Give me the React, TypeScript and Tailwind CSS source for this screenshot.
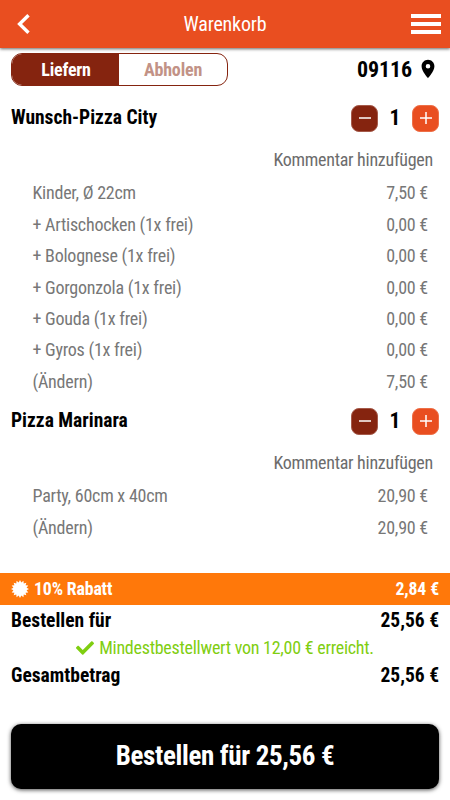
import { FaCheck } from "react-icons/fa";
import { MdPlace } from "react-icons/md";

type Line = { label: string; price: string };

type Item = { name: string; count: number; lines: Line[] };

const items: Item[] = [
  {
    name: "Wunsch-Pizza City",
    count: 1,
    lines: [
      { label: "Kinder, Ø 22cm", price: "7,50 €" },
      { label: "+ Artischocken (1x frei)", price: "0,00 €" },
      { label: "+ Bolognese (1x frei)", price: "0,00 €" },
      { label: "+ Gorgonzola (1x frei)", price: "0,00 €" },
      { label: "+ Gouda (1x frei)", price: "0,00 €" },
      { label: "+ Gyros (1x frei)", price: "0,00 €" },
      { label: "(Ändern)", price: "7,50 €" },
    ],
  },
  {
    name: "Pizza Marinara",
    count: 1,
    lines: [
      { label: "Party, 60cm x 40cm", price: "20,90 €" },
      { label: "(Ändern)", price: "20,90 €" },
    ],
  },
];

// 16-pointed badge
const badgePoints = Array.from({ length: 32 }, (_, i) => {
  const r = i % 2 === 0 ? 9 : 6.7;
  const a = (i * Math.PI) / 16;
  return `${(9 + r * Math.sin(a)).toFixed(2)},${(9 - r * Math.cos(a)).toFixed(2)}`;
}).join(" ");

function Header() {
  return (
    <header className="flex h-12 shrink-0 items-center justify-between bg-[#e94e20] pl-[17px] pr-[9px] text-white shadow-[0_1px_3px_rgba(0,0,0,0.6)]">
      <button className="w-[22px]" aria-label="Zurück">
        <svg width="13" height="20" viewBox="0 0 13 20" fill="none" stroke="currentColor" strokeWidth="3.4">
          <path d="M11.5 1.3L2.6 10l8.9 8.7" />
        </svg>
      </button>
      <h1 className="text-[20px] leading-6 tracking-[-0.19px]">Warenkorb</h1>
      <button className="flex w-[30px] flex-col gap-1" aria-label="Menü">
        <span className="h-1 w-full bg-white" />
        <span className="h-1 w-full bg-white" />
        <span className="h-1 w-full bg-white" />
      </button>
    </header>
  );
}

function CartItem({ item }: { item: Item }) {
  return (
    <section>
      <div className="flex h-12 items-center justify-between px-[11px]">
        <h2 className="pb-px text-[19.5px] font-bold leading-6">{item.name}</h2>
        <div className="flex items-center">
          <button className="flex size-[27px] items-center justify-center rounded-lg border border-[#a55a4a] bg-[#85240f]" aria-label="Weniger">
            <svg width="12" height="12" viewBox="0 0 12 12" stroke="white" strokeWidth="1.5">
              <path d="M0 6h12" />
            </svg>
          </button>
          <span className="w-[34px] text-center text-[21.5px] font-bold leading-6">{item.count}</span>
          <button className="flex size-[27px] items-center justify-center rounded-lg border border-[#ee7048] bg-[#e94e20]" aria-label="Mehr">
            <svg width="12" height="12" viewBox="0 0 12 12" stroke="white" strokeWidth="1.5">
              <path d="M0 6h12M6 0v12" />
            </svg>
          </button>
        </div>
      </div>
      <div className="flex h-[35px] items-center justify-end pr-[17px] text-[18px] tracking-[-0.27px] text-[#6c6c6c]">
        Kommentar hinzufügen
      </div>
      {item.lines.map((line) => (
        <div
          key={line.label}
          className="flex h-[31.45px] items-center justify-between pl-[32.5px] pr-[22px] text-[18px] tracking-[-0.24px] text-[#777]"
        >
          <span>{line.label}</span>
          <span>{line.price}</span>
        </div>
      ))}
    </section>
  );
}

export default function App() {
  return (
    <div className="flex h-[800px] w-[450px] flex-col overflow-hidden bg-white font-['Roboto_Condensed','Roboto',sans-serif] text-black [font-stretch:75%]">
      <Header />
      <div className="flex h-[46px] shrink-0 items-start justify-between pl-[11px] pr-[11px] pt-[5px]">
        <div className="flex h-[33px] w-[217px] overflow-hidden rounded-[11px] border border-[#85240f] text-[18px] font-bold">
          <button className="w-[107px] bg-[#85240f] pl-px tracking-[-0.2px] text-white">Liefern</button>
          <button className="flex-1 tracking-[-0.2px] text-[#c29286]">Abholen</button>
        </div>
        <div className="flex h-8 items-center gap-[5px]">
          <span className="text-[22px] font-bold tracking-[-0.1px]">09116</span>
          <MdPlace className="size-[22px]" />
        </div>
      </div>
      {items.map((item) => (
        <CartItem key={item.name} item={item} />
      ))}
      <div className="mt-auto flex h-8 shrink-0 items-center justify-between bg-[#ff780a] px-[11px] text-[17.8px] font-bold tracking-[-0.15px] text-white">
        <span className="flex items-center gap-[5px]">
          <svg width="18" height="18" viewBox="0 0 18 18" fill="currentColor">
            <polygon points={badgePoints} />
          </svg>
          10% Rabatt
        </span>
        <span>2,84 €</span>
      </div>
      <div className="flex h-[30px] shrink-0 items-center justify-between px-[11px] pt-[2px] text-[19.5px] font-bold">
        <span>Bestellen für</span>
        <span>25,56 €</span>
      </div>
      <div className="flex h-[26px] shrink-0 items-center justify-center gap-[5px] pb-px text-[18px] tracking-[-0.26px] text-[#7fce10]">
        <FaCheck className="size-[18px]" />
        Mindestbestellwert von 12,00 € erreicht.
      </div>
      <div className="flex h-[30px] shrink-0 items-center justify-between px-[11px] text-[19.5px] font-bold">
        <span>Gesamtbetrag</span>
        <span>25,56 €</span>
      </div>
      <button className="mx-[11px] mb-[11px] mt-[33px] h-[65px] shrink-0 rounded-[10px] bg-black text-[27px] font-bold tracking-[-0.35px] text-white shadow-[0_1px_4px_rgba(0,0,0,0.7)]">
        Bestellen für 25,56 €
      </button>
    </div>
  );
}
